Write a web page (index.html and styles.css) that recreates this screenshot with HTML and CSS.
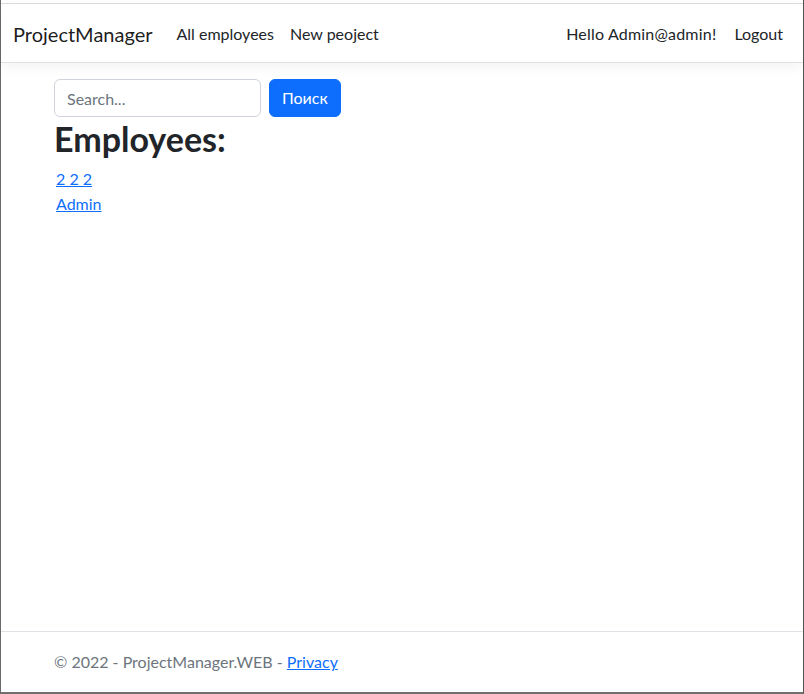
FILE: index.html
```html
<!DOCTYPE html>
<html lang="en">
<head>
<meta charset="utf-8">
<title>ProjectManager</title>
<link rel="stylesheet" href="styles.css">
</head>
<body>
<div class="frame">
  <header class="header">
    <nav class="navbar">
      <div class="nav-inner">
        <a class="brand" href="#">ProjectManager</a>
        <ul class="nav-list">
          <li><a class="nav-link" href="#">All employees</a></li>
          <li><a class="nav-link" href="#">New peoject</a></li>
        </ul>
        <ul class="nav-list nav-right">
          <li><span class="nav-link hello">Hello Admin@admin!</span></li>
          <li><a class="nav-link" href="#">Logout</a></li>
        </ul>
      </div>
    </nav>
  </header>
  <main class="container">
    <form class="search">
      <input class="search-input" type="text" placeholder="Search...">
      <button class="btn" type="button">Поиск</button>
    </form>
    <h1 class="title">Employees:</h1>
    <div class="list">
      <div class="item"><a href="#">2 2 2</a></div>
      <div class="item"><a href="#">Admin</a></div>
    </div>
  </main>
  <footer class="footer">
    <div class="container">© 2022 - ProjectManager.WEB - <a href="#">Privacy</a></div>
  </footer>
</div>
</body>
</html>
```

FILE: styles.css
```css
* { box-sizing: border-box; }
html, body { margin: 0; height: 100%; }
body {
  font-family: Lato, "Noto Sans", sans-serif;
  font-size: 16px;
  line-height: 1.5;
  color: #212529;
  background: #fff;
}
a { color: #0d6efd; }
.frame {
  min-height: 100vh;
  display: flex;
  flex-direction: column;
  border-left: 1px solid #6a6a6a;
  border-right: 1px solid #555;
  border-bottom: 2px solid #707070;
  padding-top: 3px;
}
.header { border-top: 1px solid #dcdcdc; }
.navbar {
  padding: 10px 0 8px;
  border-bottom: 1px solid #dee2e6;
  box-shadow: 0 4px 12px rgba(0,0,0,.05);
  margin-bottom: 16px;
}
.nav-inner {
  display: flex;
  align-items: center;
  padding: 0 12px;
}
.brand {
  font-size: 20px;
  line-height: 30px;
  padding: 5px 0;
  margin-right: 16px;
  color: rgba(0,0,0,.9);
  text-decoration: none;
}
.nav-list {
  display: flex;
  list-style: none;
  margin: 0;
  padding: 0;
}
.nav-right { margin-left: auto; }
.nav-link {
  display: block;
  padding: 8px;
  color: #212529;
  text-decoration: none;
}
.hello { margin-right: 2px; letter-spacing: 0.2px; }
.container {
  width: 720px;
  margin: 0 auto;
  padding: 0 12px;
}
.search {
  display: flex;
  gap: 8px;
}
.search-input {
  width: 207px;
  height: 38px;
  padding: 6px 12px;
  font: inherit;
  color: #212529;
  border: 1px solid #ced4da;
  border-radius: 6px;
}
.search-input::placeholder { color: #6c757d; }
.btn {
  height: 38px;
  padding: 6px 12px;
  font: inherit;
  color: #fff;
  background: #0d6efd;
  border: 1px solid #0d6efd;
  border-radius: 6px;
}
.title {
  font-size: 34px;
  font-weight: 700;
  line-height: 1.2;
  margin: 0 0 6px;
  padding-top: 2px;
}
.list { padding-left: 2px; }
.item { line-height: 25px; }
.footer {
  margin-top: auto;
  border-top: 1px solid #dee2e6;
  line-height: 60px;
  color: #6c757d;
  white-space: nowrap;
}
```
